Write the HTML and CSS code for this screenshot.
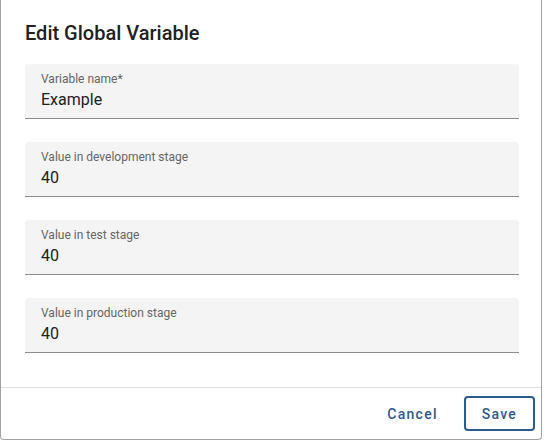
FILE: index.html
```html
<!DOCTYPE html>
<html lang="en">
<head>
<meta charset="utf-8">
<title>Edit Global Variable</title>
<link rel="stylesheet" href="styles.css">
</head>
<body>
<div class="dialog">
  <div class="dialog-main">
    <h2 class="dialog-title">Edit Global Variable</h2>
    <div class="fields">
      <div class="field">
        <div class="field-label">Variable name*</div>
        <div class="field-value">Example</div>
      </div>
      <div class="field">
        <div class="field-label">Value in development stage</div>
        <div class="field-value">40</div>
      </div>
      <div class="field">
        <div class="field-label">Value in test stage</div>
        <div class="field-value">40</div>
      </div>
      <div class="field">
        <div class="field-label">Value in production stage</div>
        <div class="field-value">40</div>
      </div>
    </div>
  </div>
  <div class="dialog-actions">
    <button class="btn btn-text">Cancel</button>
    <button class="btn btn-outline">Save</button>
  </div>
</div>
</body>
</html>
```

FILE: styles.css
```css
html, body {
  margin: 0;
  padding: 0;
  background: #ffffff;
}

body {
  font-family: Roboto, "Liberation Sans", Arial, sans-serif;
  color: #212121;
}

.dialog {
  box-sizing: border-box;
  width: 542px;
  height: 440px;
  border: 1px solid #a2a2a2;
  border-top: none;
  border-radius: 0 0 4px 4px;
  background: #ffffff;
  display: flex;
  flex-direction: column;
}

.dialog-main {
  flex: 1;
  padding: 21px 0 0 24px;
}

.dialog-title {
  margin: 0;
  font-size: 20px;
  line-height: 24px;
  font-weight: 500;
  color: #212121;
}

.fields {
  margin-top: 19px;
  display: flex;
  flex-direction: column;
  gap: 23px;
  width: 494px;
}

.field {
  box-sizing: border-box;
  height: 55px;
  padding: 7px 16px 0;
  background: #f4f4f4;
  border-bottom: 1px solid #8c8c8c;
  border-radius: 4px 4px 0 0;
}

.field-label {
  font-size: 12px;
  line-height: 16px;
  color: #666666;
}

.field-value {
  margin-top: 3px;
  font-size: 16px;
  line-height: 20px;
  color: #212121;
}

.dialog-actions {
  box-sizing: border-box;
  height: 52px;
  border-top: 1px solid #e0e0e0;
  display: flex;
  align-items: center;
  justify-content: flex-end;
  gap: 8px;
  padding-right: 6px;
}

.btn {
  box-sizing: border-box;
  height: 35px;
  font-family: Roboto, "Liberation Sans", Arial, sans-serif;
  font-size: 14px;
  font-weight: 500;
  letter-spacing: 1.25px;
  color: #2d5a8e;
  background: transparent;
  border-radius: 4px;
  cursor: pointer;
}

.btn-text {
  border: 2px solid transparent;
  padding: 0 16px;
}

.btn-outline {
  border: 2px solid #2d5a8e;
  padding: 0 16px;
}
```
